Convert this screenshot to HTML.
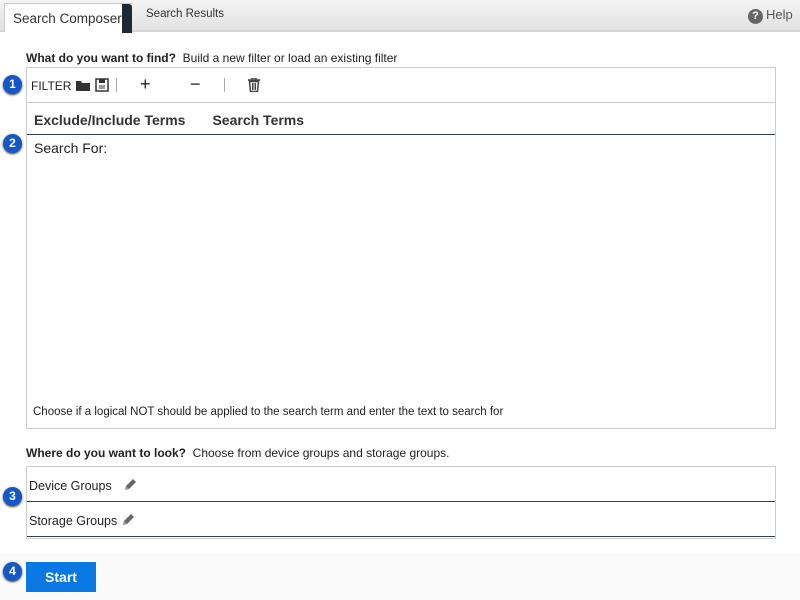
<!DOCTYPE html>
<html><head><style>
*{margin:0;padding:0;box-sizing:border-box}
body{width:800px;height:600px;background:#fff;font-family:"Liberation Sans",sans-serif;position:relative;overflow:hidden;color:#222}
.bar{position:absolute;left:0;top:0;width:800px;height:32px;background:linear-gradient(#f4f4f4,#e2e2e2);border-bottom:2px solid #d6d6d6}
.tab{position:absolute;left:4px;top:3px;width:128px;height:29px;background:#fff;border:1px solid #ccc;border-bottom:none;font-size:13.5px;color:#333;padding:7px 0 0 8px;white-space:nowrap}
.tab:after{content:"";position:absolute;right:-1px;top:0;width:10px;height:29px;background:#1d2a33;border-top-right-radius:3px}
.t2{position:absolute;left:146px;top:8px;font-size:11.5px;color:#333}
.help{position:absolute;left:748px;top:7px;font-size:13px;color:#555}
.help b{display:inline-block;width:15px;height:15px;border-radius:50%;background:#666;color:#fff;font-size:11px;text-align:center;line-height:15px;margin-right:3px}
.h{position:absolute;left:26px;font-size:12px;color:#222}
.box{position:absolute;left:26px;border:1px solid #ccc;background:#fff}
.num{position:absolute;left:3px;width:19px;height:19px;border-radius:50%;background:#1458c8;color:#fff;font-size:12px;font-weight:bold;text-align:center;line-height:19px;box-shadow:0 1px 2px #333}
.start{position:absolute;left:26px;top:562px;width:70px;height:30px;background:#0a78e2;color:#fff;font-weight:bold;font-size:14px;text-align:center;line-height:30px}
.pen{display:inline-block;vertical-align:-2px}
</style></head><body>
<div class="bar"><div class="tab">Search Composer</div><div class="t2">Search Results</div><div class="help"><b>?</b>Help</div></div>
<div class="h" style="top:51px"><b>What do you want to find?</b>&nbsp; Build a new filter or load an existing filter</div>
<div class="box" style="top:67px;width:750px;height:362px">
 <div style="height:35px;border-bottom:1px solid #ccc;position:relative;font-size:12px">
  <span style="position:absolute;left:4px;top:11px">FILTER</span>
  <svg style="position:absolute;left:48px;top:11px" width="16" height="13"><path d="M1 2h5l1 2h8v8H1z" fill="#333"/></svg>
  <svg style="position:absolute;left:68px;top:10px" width="14" height="14"><rect x="1" y="1" width="12" height="12" fill="none" stroke="#333" stroke-width="1.5"/><rect x="4" y="1" width="6" height="4" fill="#333"/><path d="M4 8h6M4 10h6" stroke="#333"/></svg>
  <div style="position:absolute;left:89px;top:10px;width:1px;height:14px;background:#aaa"></div>
  <span style="position:absolute;left:113px;top:6px;font-size:18px">+</span>
  <span style="position:absolute;left:163px;top:6px;font-size:18px">−</span>
  <div style="position:absolute;left:197px;top:10px;width:1px;height:14px;background:#aaa"></div>
  <svg style="position:absolute;left:221px;top:10px" width="12" height="14"><path d="M0 2h12M4 2V0h4v2M1.5 3.5h9l-1 10h-7z" fill="none" stroke="#444" stroke-width="1.5"/><path d="M4.5 5v7M6 5v7M7.5 5v7" stroke="#444"/></svg>
 </div>
 <div style="height:32px;border-bottom:1px solid #2f3f4c;font-size:14px;font-weight:bold;color:#333;padding:9px 0 0 7px">Exclude/Include Terms<span style="margin-left:27px">Search Terms</span></div>
 <div style="font-size:14px;padding:5px 0 0 7px;color:#222">Search For:</div>
 <div style="position:absolute;left:6px;top:338px;font-size:11.5px">Choose if a logical NOT should be applied to the search term and enter the text to search for</div>
</div>
<div class="h" style="top:446px"><b>Where do you want to look?</b>&nbsp; Choose from device groups and storage groups.</div>
<div class="box" style="top:466px;width:750px;height:73px;font-size:12.5px">
 <div style="height:35px;border-bottom:1px solid #2f3f4c;padding:11px 0 0 2px">Device Groups <svg class="pen" style="margin-left:8px" width="14" height="14"><path d="M2 12l1-4 7-7 3 3-7 7z" fill="#666"/><path d="M2 12l1-4 3 3z" fill="#999"/></svg></div>
 <div style="height:35px;border-bottom:1px solid #2f3f4c;padding:11px 0 0 2px">Storage Groups <svg class="pen" width="14" height="14"><path d="M2 12l1-4 7-7 3 3-7 7z" fill="#666"/><path d="M2 12l1-4 3 3z" fill="#999"/></svg></div>
</div>
<div style="position:absolute;left:0;top:554px;width:800px;height:46px;background:#fafafa"></div>
<div class="start">Start</div>
<div class="num" style="top:75px">1</div>
<div class="num" style="top:134px">2</div>
<div class="num" style="top:487px">3</div>
<div class="num" style="top:562px">4</div>
</body></html>
